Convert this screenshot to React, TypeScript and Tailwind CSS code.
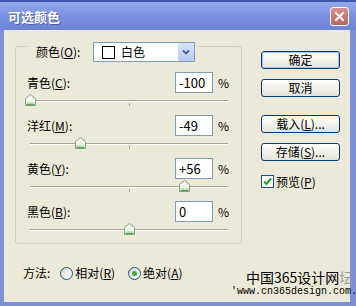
import React from "react";

const UI = { fontFamily: '"Noto Sans CJK SC", "Noto Sans", sans-serif' };

function Thumb() {
  return (
    <svg width="11" height="12" viewBox="0 0 11 12">
      <polygon points="0.5,4.5 5.5,0.5 10.5,4.5 10.5,11.5 0.5,11.5" fill="#f4f4ee" stroke="#8c9c8c" />
      <line x1="1.5" y1="10.5" x2="9.5" y2="10.5" stroke="#4caf50" strokeWidth="1.5" />
      <line x1="1.5" y1="9" x2="9.5" y2="9" stroke="#a6d8a6" strokeWidth="1" />
    </svg>
  );
}

function Row({ label, u, value, v }: { label: string; u: string; value: string; v: number }) {
  const center = 99 + (v * 99) / 100;
  return (
    <div>
      <div className="flex items-center h-[21px] pl-[11px]">
        <div className="w-[148px] text-[12px] text-black leading-none">
          {label}(<span className="underline">{u}</span>):
        </div>
        <div className="w-[38px] h-[21px] bg-white border border-[#7f9db9] flex items-center pl-[3px] text-[13px] text-black leading-none">
          {value}
        </div>
        <div className="ml-[5px] text-[12px] text-black leading-none">%</div>
      </div>
      <div className="relative ml-[14px] w-[198px] h-[22px]">
        <div className="absolute left-0 right-0 top-[7px] h-[2px] border-t border-[#a5a5a0] border-b border-b-white" />
        <div className="absolute left-[99px] top-[10px] w-px h-[3px] bg-[#a5a5a0]" />
        <div className="absolute top-[1px]" style={{ left: center - 5.5 }}>
          <Thumb />
        </div>
      </div>
    </div>
  );
}

function Btn({ children, def }: { children: React.ReactNode; def?: boolean }) {
  return (
    <div className="w-[79px] h-[18px] rounded-[3px] border border-[#003c74] bg-gradient-to-b from-[#ffffff] to-[#e6e4d8] flex items-center justify-center">
      <div
        className={
          "w-full h-full rounded-[2px] flex items-center justify-center text-[12px] text-black leading-none " +
          (def ? "border border-[#a8c0f0]" : "")
        }
      >
        {children}
      </div>
    </div>
  );
}

function Radio({ on }: { on?: boolean }) {
  return (
    <div className="w-[13px] h-[13px] rounded-full border border-[#1c5180] bg-gradient-to-br from-[#dcdcd4] to-white flex items-center justify-center">
      {on && <div className="w-[5px] h-[5px] rounded-full bg-[#3fa83f]" />}
    </div>
  );
}

export default function App() {
  return (
    <div className="w-[356px] h-[306px] flex flex-col bg-[#7c90da] overflow-hidden" style={UI}>
      <div className="h-[30px] shrink-0 border-t-2 border-[#3f55a8] bg-gradient-to-b from-[#93a8ec] via-[#7a91e0] to-[#6d84d6] flex items-center justify-between pl-[8px] pr-[7px]">
        <div className="text-[13px] font-bold text-white leading-none [text-shadow:1px_1px_0_#4a5fa8]">可选颜色</div>
        <div className="w-[19px] h-[19px] rounded-[3px] border border-white bg-gradient-to-b from-[#d99090] to-[#b86464] flex items-center justify-center">
          <svg width="11" height="11" viewBox="0 0 11 11">
            <path d="M2 2 L9 9 M9 2 L2 9" stroke="white" strokeWidth="2" strokeLinecap="square" />
          </svg>
        </div>
      </div>
      <div className="relative flex-1 ml-[4px] mr-[6px] mb-[4px] bg-[#ece9d8] flex">
        <div className="pl-[11px] pt-[16px]">
          <div className="relative w-[227px] h-[198px] border border-[#d0d0bf] rounded-[3px] pt-[25px]">
            <div className="absolute left-[11px] top-[-5px] flex items-center bg-[#ece9d8] pl-[9px] pr-[3px]">
              <div className="text-[12px] text-black leading-none w-[57px]">
                颜色(<span className="underline">O</span>):
              </div>
              <div className="w-[102px] h-[20px] bg-white border border-[#7f9db9] flex items-center">
                <div className="ml-[8px] w-[13px] h-[13px] border border-black bg-white" />
                <div className="ml-[6px] flex-1 text-[12px] text-black leading-none">白色</div>
                <div className="w-[16px] h-[18px] bg-gradient-to-b from-[#d8e4fc] to-[#b5c9f4] rounded-[2px] flex items-center justify-center">
                  <svg width="8" height="6" viewBox="0 0 8 6">
                    <path d="M1 1.5 L4 4.5 L7 1.5" stroke="#4d6185" strokeWidth="1.8" fill="none" />
                  </svg>
                </div>
              </div>
            </div>
            <Row label="青色" u="C" value="-100" v={-100} />
            <Row label="洋红" u="M" value="-49" v={-49} />
            <Row label="黄色" u="Y" value="+56" v={56} />
            <Row label="黑色" u="B" value="0" v={0} />
          </div>
          <div className="mt-[22px] pl-[8px] flex items-center h-[14px] text-[12px] text-black leading-none">
            <span>方法:</span>
            <div className="ml-[10px]"><Radio /></div>
            <span className="ml-[2px]">相对(<span className="underline">R</span>)</span>
            <div className="ml-[13px]"><Radio on /></div>
            <span className="ml-[2px]">绝对(<span className="underline">A</span>)</span>
          </div>
        </div>
        <div className="ml-[19px] pt-[21px] flex flex-col">
          <Btn def>确定</Btn>
          <div className="mt-[10px]"><Btn>取消</Btn></div>
          <div className="mt-[18px]"><Btn>载入(<span className="underline">L</span>)...</Btn></div>
          <div className="mt-[10px]"><Btn>存储(<span className="underline">S</span>)...</Btn></div>
          <div className="mt-[14px] flex items-center">
            <div className="w-[13px] h-[13px] border border-[#1c5180] bg-white flex items-center justify-center">
              <svg width="9" height="9" viewBox="0 0 9 9">
                <path d="M1 4.5 L3.5 7 L8 1.5" stroke="#21a121" strokeWidth="2" fill="none" />
              </svg>
            </div>
            <span className="ml-[2px] text-[12px] text-black leading-none">预览(<span className="underline">P</span>)</span>
          </div>
        </div>
        <div className="absolute left-[227px] top-[240px] leading-none">
          <div className="pl-[15px] text-[14px] text-black leading-none">
            中国365设计网<span className="text-[#9a9aa8]">坛</span>
          </div>
          <div className="mt-[3px] text-[10px] text-black leading-none" style={{ fontFamily: '"Liberation Mono", monospace' }}>
            'www.cn365design.com.
          </div>
        </div>
      </div>
    </div>
  );
}
